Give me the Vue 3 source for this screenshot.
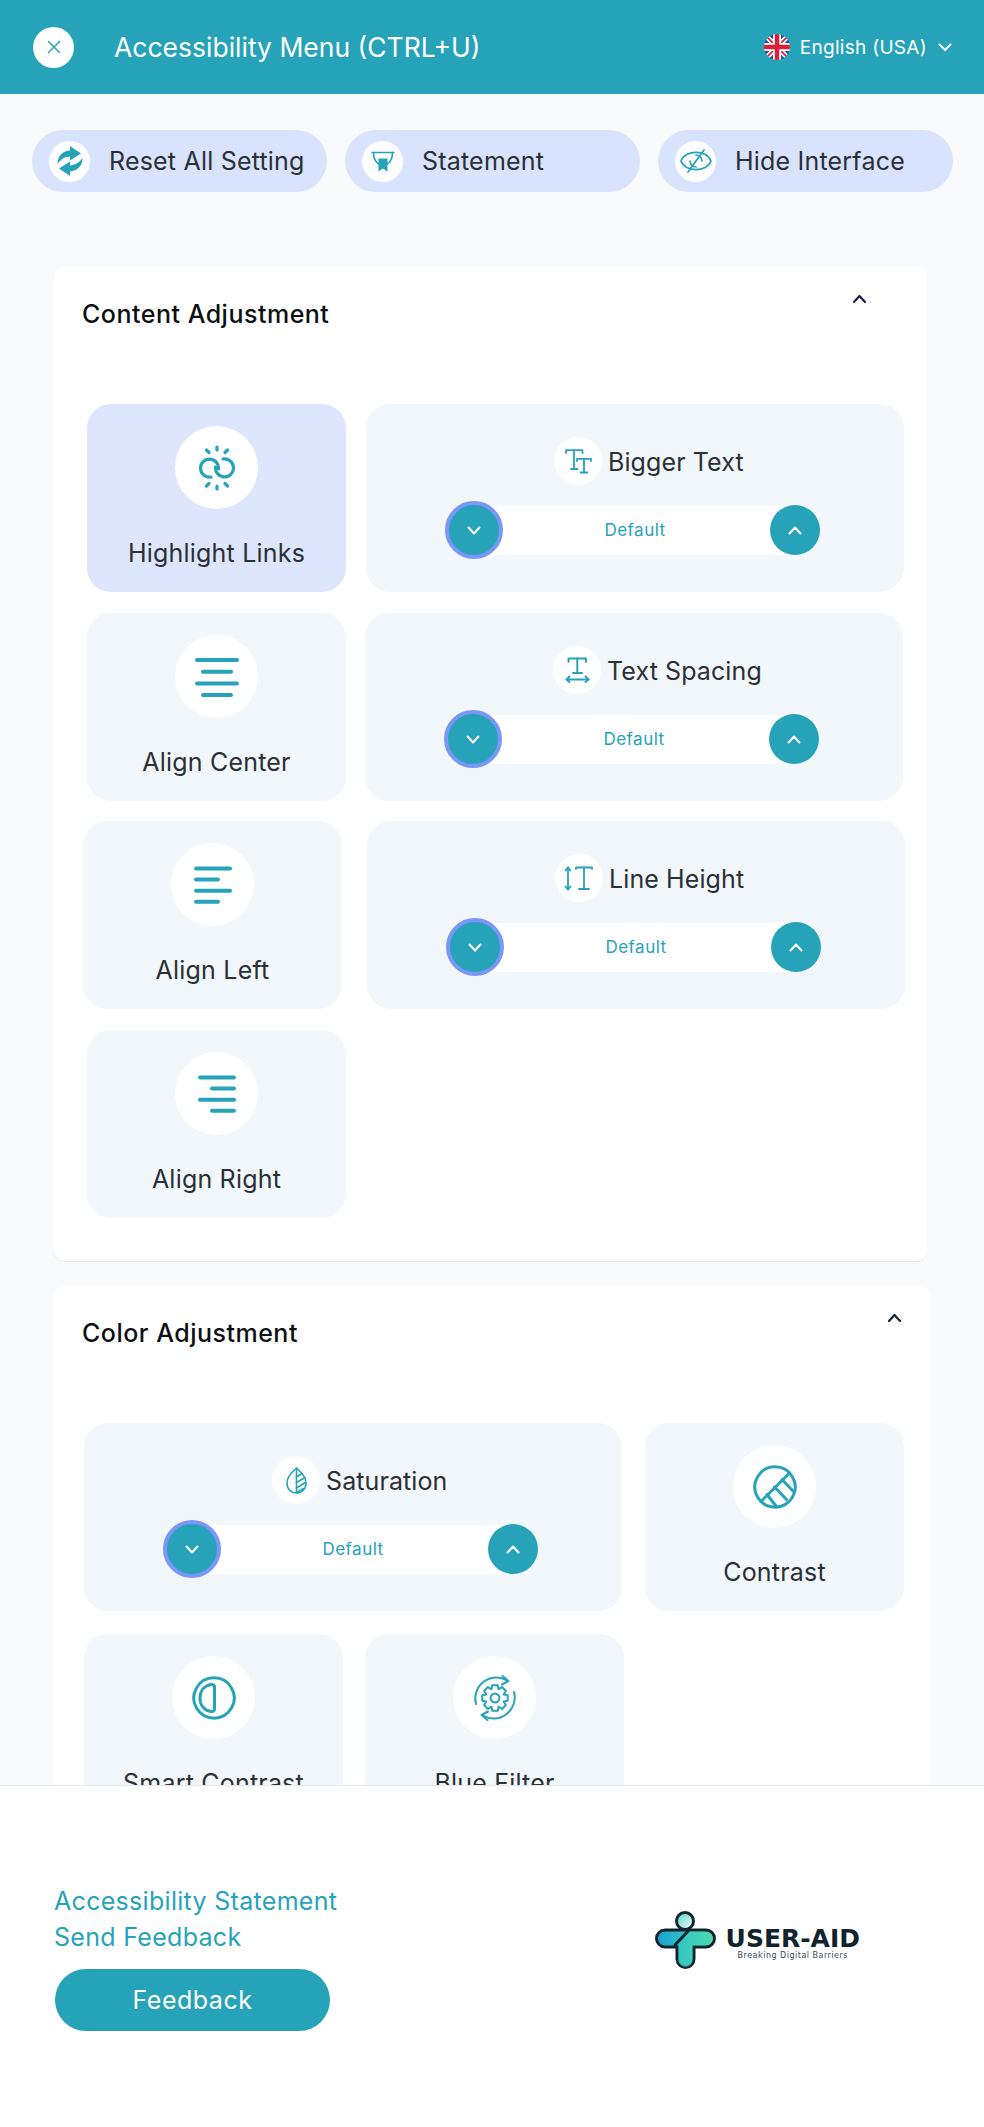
<script setup>
import { h } from 'vue'

const TEAL = '#26a3b9'

// gear outline used by the blue filter icon
const gear = (cx, cy, r1, r2, n) => {
  const pts = []
  const step = (Math.PI * 2) / n
  for (let i = 0; i < n; i++) {
    const a = i * step - Math.PI / 2
    const o = [[r1, -0.3], [r2, -0.17], [r2, 0.17], [r1, 0.3]]
    o.forEach(([r, f]) => {
      pts.push((cx + r * Math.cos(a + f * step * 1.6)).toFixed(2) + ' ' + (cy + r * Math.sin(a + f * step * 1.6)).toFixed(2))
    })
  }
  return 'M' + pts.join('L') + 'Z'
}

const bars = (rows) => rows.map(([x1, x2, y]) => `M${x1} ${y}H${x2}`)

const icons = {
  close: { w: 16, h: 16, sw: 1.5, paths: ['M2.5 2.5L13.5 13.5', 'M13.5 2.5L2.5 13.5'] },
  reset: {
    w: 26, h: 30, sw: 0,
    paths: [
      { f: 'M0.5 18C0.5 10 6 4.8 13 4.6V0L24 7.4L13 14.6V10.6C8 10.8 3.5 13.5 0.5 18Z' },
      { f: 'M25.500 12C25.500 20 20 25.200 13 25.400V30L2 22.600L13 15.400V19.400C18 19.200 22.500 16.500 25.500 12Z' }
    ]
  },
  statement: {
    w: 24, h: 21, sw: 1.6,
    paths: ['M1 1.5H23', 'M2.5 1.5C2.5 8 5 11.5 8 13', 'M21.5 1.5C21.5 8 19 11.5 16 13', { f: 'M7.5 7.5H16.5V20.5L12 17.5L7.5 20.5Z' }]
  },
  hide: {
    w: 32, h: 24, sw: 1.7,
    paths: ['M1 12C5 0.5 27 0.5 31 12C27 23.500 5 23.500 1 12Z', 'M16 6A6 6 0 0 1 22 12', 'M10 12A6 6 0 0 0 16 18', 'M8 23L24 1']
  },
  link: {
    w: 36, h: 46, sw: 3.2,
    paths: ['M12 32A9 9 0 1 1 19.5 24', 'M24 14A9 9 0 1 1 16.5 22', 'M18 2V5', 'M7.5 5L10 7.5', 'M28.5 5L26 7.5', 'M18 41V44', 'M7.5 41L10 38.5', 'M28.5 41L26 38.5']
  },
  center: { w: 44, h: 40, sw: 4, paths: bars([[2, 42, 3], [8, 36, 14.7], [2, 42, 26.4], [8, 36, 38]]) },
  left: { w: 38, h: 38, sw: 4, paths: bars([[2, 36, 2.5], [2, 24, 13.6], [2, 36, 24.7], [2, 24, 35.8]]) },
  right: { w: 38, h: 38, sw: 4, paths: bars([[2, 36, 2.5], [14, 36, 13.6], [2, 36, 24.7], [14, 36, 35.8]]) },
  bigger: {
    w: 27, h: 25, sw: 1.8,
    paths: ['M1 4V1.2H17.5V4', 'M9 1.2V20', 'M6 20H12.5', 'M12 12V9.8H26V12', 'M19 9.8V23.5', 'M15.5 23.5H22.5']
  },
  spacing: {
    w: 25, h: 26, sw: 1.9,
    paths: ['M3.5 5V1.5H21V5', 'M12.3 1.5V16', 'M8 16H17', 'M1.5 22.5H23.5', 'M4.5 19.5L1.5 22.5L4.5 25', 'M20.5 19.5L23.5 22.5L20.5 25']
  },
  height: {
    w: 30, h: 25, sw: 1.8,
    paths: ['M4 1.5V23.5', 'M1.5 4.5L4 1.5L6.5 4.5', 'M1.5 20.5L4 23.5L6.5 20.5', 'M12 3V1.5H28V3', 'M20 1.5V23', 'M15 23H25']
  },
  leaf: {
    w: 21, h: 27, sw: 1.6,
    paths: ['M10.5 1C4 6.5 1 11 1 16C1 22 5 26 10.5 26C16 26 20 22 20 16C20 11 17 6.5 10.5 1Z', 'M10.5 1V26', 'M10.5 10L16 6.5', 'M10.5 15.5L19 10.5', 'M10.5 21L19.5 15.5', 'M10.5 25.5L17.5 21.5']
  },
  contrast: {
    w: 44, h: 44, sw: 3,
    paths: ['M22 1.8A20.2 20.2 0 1 0 22.01 1.8Z', 'M8 36.5L36.5 8', 'M14 29.5L23 41', 'M21.5 22L33.5 34.5', 'M29 14.5L40 26']
  },
  smart: {
    w: 44, h: 44, sw: 3,
    paths: ['M22 1.8A20.2 20.2 0 1 0 22.01 1.8Z', 'M19.500 8.500C12 9.500 8 15 8 22C8 29 12 34.500 19.500 35.500C21.500 35.700 22.500 34.700 22.500 33V11C22.500 9.300 21.500 8.300 19.500 8.500Z']
  },
  filter: {
    w: 46, h: 46, sw: 2,
    paths: [
      'M4 29A21 21 0 0 1 35 5.5', 'M30.5 1L36.5 6L30 9.5', 'M42 17A21 21 0 0 1 11 40.5', 'M15.5 45L9.5 40L16 36.5',
      gear(23, 23, 9.5, 13, 8), 'M23 18.5A4.5 4.5 0 1 0 23.01 18.5Z'
    ]
  }
}

const Ico = (props) => {
  const i = icons[props.name]
  return h('svg', {
    width: i.w, height: i.h, viewBox: `0 0 ${i.w} ${i.h}`, fill: 'none', stroke: TEAL,
    'stroke-width': i.sw, 'stroke-linecap': 'round', 'stroke-linejoin': 'round'
  }, i.paths.map((p) => typeof p === 'string' ? h('path', { d: p }) : h('path', { d: p.f, fill: TEAL, stroke: 'none' })))
}
Ico.props = ['name']

const actions = [
  { label: 'Reset All Setting', icon: 'reset' },
  { label: 'Statement', icon: 'statement' },
  { label: 'Hide Interface', icon: 'hide' }
]

const sections = [
  {
    title: 'Content Adjustment',
    cls: 'card-content',
    rows: [
      { left: 33, top: 0, gap: 20, items: [{ label: 'Highlight Links', icon: 'link', active: true }, { label: 'Bigger Text', icon: 'bigger', wide: true }] },
      { left: 33, top: 21, gap: 19, items: [{ label: 'Align Center', icon: 'center' }, { label: 'Text Spacing', icon: 'spacing', wide: true }] },
      { left: 29, top: 20, gap: 25, items: [{ label: 'Align Left', icon: 'left' }, { label: 'Line Height', icon: 'height', wide: true }] },
      { left: 33, top: 21, gap: 21, items: [{ label: 'Align Right', icon: 'right' }] }
    ]
  },
  {
    title: 'Color Adjustment',
    cls: 'card-color',
    rows: [
      { left: 30, top: 0, gap: 23, items: [{ label: 'Saturation', icon: 'leaf', wide: true }, { label: 'Contrast', icon: 'contrast' }] },
      { left: 30, top: 23, gap: 22, items: [{ label: 'Smart Contrast', icon: 'smart' }, { label: 'Blue Filter', icon: 'filter' }] }
    ]
  }
]
</script>

<template>
  <div class="page">
    <header class="topbar">
      <button class="close"><Ico name="close" /></button>
      <h1 class="title">Accessibility Menu (CTRL+U)</h1>
      <div class="lang">
        <svg width="26" height="26" viewBox="0 0 26 26">
          <defs>
            <clipPath id="flagClip"><circle cx="13" cy="13" r="13" /></clipPath>
          </defs>
          <g clip-path="url(#flagClip)">
            <rect width="26" height="26" fill="#1f4ea3" />
            <path d="M0 0L26 26M26 0L0 26" stroke="#fff" stroke-width="5" />
            <path d="M0 0L26 26M26 0L0 26" stroke="#d8203a" stroke-width="1.6" />
            <path d="M13 0V26M0 13H26" stroke="#fff" stroke-width="8" />
            <path d="M13 0V26M0 13H26" stroke="#d8203a" stroke-width="4.5" />
          </g>
        </svg>
        <span>English (USA)</span>
        <svg class="lang-caret" width="14" height="9" viewBox="0 0 14 9" fill="none" stroke="#fff" stroke-width="2" stroke-linecap="round" stroke-linejoin="round">
          <path d="M1.5 1.5L7 7L12.5 1.5" />
        </svg>
      </div>
    </header>

    <main class="body">
      <div class="actions">
        <button v-for="a in actions" :key="a.label" class="action">
          <span class="action-icon"><Ico :name="a.icon" /></span>
          <span>{{ a.label }}</span>
        </button>
      </div>

      <section v-for="s in sections" :key="s.title" class="card" :class="s.cls">
        <div class="card-head">
          <h2>{{ s.title }}</h2>
          <svg class="card-caret" width="15" height="10" viewBox="0 0 15 10" fill="none" stroke="#13204d" stroke-width="2.2" stroke-linecap="round" stroke-linejoin="round">
            <path d="M2 8L7.5 2L13 8" />
          </svg>
        </div>

        <div
          v-for="(row, ri) in s.rows"
          :key="ri"
          class="row"
          :style="{ marginLeft: row.left + 'px', marginTop: row.top + 'px', gap: row.gap + 'px' }"
        >
          <template v-for="item in row.items" :key="item.label">
            <div v-if="item.wide" class="tile tile-wide">
              <div class="wide-head">
                <span class="small-circle"><Ico :name="item.icon" /></span>
                <span class="wide-label">{{ item.label }}</span>
              </div>
              <div class="stepper">
                <button class="step step-down">
                  <svg width="14" height="9" viewBox="0 0 14 9" fill="none" stroke="#fff" stroke-width="2" stroke-linecap="round" stroke-linejoin="round"><path d="M1.5 1.5L7 7.5L12.5 1.5" /></svg>
                </button>
                <div class="step-value">Default</div>
                <button class="step step-up">
                  <svg width="14" height="9" viewBox="0 0 14 9" fill="none" stroke="#fff" stroke-width="2" stroke-linecap="round" stroke-linejoin="round"><path d="M1.5 7.5L7 1.5L12.5 7.5" /></svg>
                </button>
              </div>
            </div>
            <div v-else class="tile tile-small" :class="{ active: item.active }">
              <span class="big-circle"><Ico :name="item.icon" /></span>
              <span class="tile-label">{{ item.label }}</span>
            </div>
          </template>
        </div>
      </section>
    </main>

    <footer class="footer">
      <div class="footer-left">
        <a class="footer-link">Accessibility Statement</a>
        <a class="footer-link">Send Feedback</a>
        <button class="feedback">Feedback</button>
      </div>
      <div class="logo">
        <svg width="62" height="58" viewBox="0 0 62 58">
          <defs>
            <linearGradient id="logoBar" x1="0" y1="0" x2="1" y2="0">
              <stop offset="0" stop-color="#1a9fd6" />
              <stop offset="0.5" stop-color="#2fc4c0" />
              <stop offset="1" stop-color="#62e39a" />
            </linearGradient>
            <linearGradient id="logoHead" x1="0" y1="0" x2="1" y2="1">
              <stop offset="0" stop-color="#4fd8c8" />
              <stop offset="1" stop-color="#ffffff" />
            </linearGradient>
          </defs>
          <circle cx="30" cy="10" r="8.5" fill="url(#logoHead)" stroke="#10242f" stroke-width="3" />
          <path d="M10 19H51a8.5 8.5 0 0 1 0 17H39V48a8.500 8.500 0 0 1 -17 0V36H10a8.500 8.500 0 0 1 0 -17Z" fill="url(#logoBar)" stroke="#10242f" stroke-width="3" />
          <path d="M35 20.500H50a7 7 0 0 1 0 14H37.500V49a7 7 0 0 1 -14 0V34.500Z" fill="#3fcdbf" opacity="0.55" />
          <path d="M20 34L34 19" stroke="#10242f" stroke-width="3" stroke-linecap="round" />
        </svg>
        <div class="logo-text">
          <div class="logo-name">USER-AID</div>
          <div class="logo-tag">Breaking Digital Barriers</div>
        </div>
      </div>
    </footer>
  </div>
</template>

<style>
body {
  margin: 0;
  background: #f9fafc;
}
</style>

<style scoped>
.page {
  width: 984px;
  height: 2127px;
  display: flex;
  flex-direction: column;
  overflow: hidden;
  font-family: Inter, "Open Sans", sans-serif;
  color: #2b2f36;
}

button {
  font-family: inherit;
  border: none;
  cursor: pointer;
  padding: 0;
}

.topbar {
  height: 94px;
  flex: none;
  background: #26a3b9;
  color: #fff;
  display: flex;
  align-items: center;
  padding-left: 33px;
  padding-right: 32px;
  box-sizing: border-box;
}

.close {
  width: 41px;
  height: 41px;
  border-radius: 50%;
  background: #fff;
  display: flex;
  align-items: center;
  justify-content: center;
}

.title {
  margin: 0 0 0 40px;
  font-size: 26.5px;
  font-weight: 400;
  line-height: 36px;
}

.lang {
  margin-left: auto;
  display: flex;
  align-items: center;
  font-size: 19px;
  letter-spacing: 0.3px;
}

.lang span {
  margin-left: 10px;
}

.lang-caret {
  margin-left: 11px;
}

.body {
  flex: 1;
  min-height: 0;
  overflow: hidden;
  background: #f9fafc;
}

.actions {
  display: flex;
  gap: 18px;
  padding: 36px 0 0 32px;
  margin-bottom: 75px;
}

.action {
  width: 295px;
  height: 62px;
  border-radius: 31px;
  background: #d9e3fd;
  display: flex;
  align-items: center;
  padding-left: 17px;
  gap: 19px;
  font-size: 25px;
  letter-spacing: 0.2px;
  color: #2b2f36;
}

.action-icon {
  width: 41px;
  height: 41px;
  border-radius: 50%;
  background: #fff;
  display: flex;
  align-items: center;
  justify-content: center;
  flex: none;
}

.card {
  background: #fff;
  border-radius: 10px;
  margin-left: 54px;
  width: 873px;
  padding-bottom: 43px;
  margin-bottom: 25px;
  box-shadow: 0 1px 0 #e5e9ee;
}

.card-color {
  width: 876px;
  box-shadow: none;
}

.card-head {
  height: 137px;
  box-sizing: border-box;
  display: flex;
  justify-content: space-between;
  padding: 29px 60px 0 28px;
}

.card-color .card-head {
  padding-right: 28px;
}

.card-head h2 {
  margin: 0;
  font-size: 25px;
  font-weight: 450;
  line-height: 36px;
  letter-spacing: 0.5px;
  color: #0c0f14;
}

.card-caret {
  margin-top: -2px;
}

.row {
  display: flex;
}

.tile {
  height: 188px;
  border-radius: 24px;
  background: #f1f7fa;
  box-sizing: border-box;
  flex: none;
}

.tile-small {
  width: 259px;
  padding-top: 22px;
  display: flex;
  flex-direction: column;
  align-items: center;
}

.tile-small.active {
  background: #dee6fe;
}

.big-circle {
  width: 83px;
  height: 83px;
  border-radius: 50%;
  background: #fff;
  display: flex;
  align-items: center;
  justify-content: center;
  flex: none;
}

.tile-label {
  margin-top: 26px;
  font-size: 25px;
  line-height: 36px;
  letter-spacing: 0.2px;
  white-space: nowrap;
}

.tile-wide {
  width: 538px;
  padding-top: 33px;
}

.wide-head {
  display: flex;
  align-items: center;
  padding-left: 188px;
  height: 48px;
}

.small-circle {
  width: 48px;
  height: 48px;
  border-radius: 50%;
  background: #fff;
  display: flex;
  align-items: center;
  justify-content: center;
  flex: none;
}

.wide-label {
  margin: 2px 0 0 6px;
  font-size: 25px;
  line-height: 36px;
  letter-spacing: 0.1px;
  white-space: nowrap;
}

.stepper {
  display: flex;
  align-items: center;
  width: 375px;
  height: 58px;
  margin: 16px 0 0 79px;
}

.step {
  position: relative;
  z-index: 1;
  border-radius: 50%;
  background: #26a3b9;
  display: flex;
  align-items: center;
  justify-content: center;
  flex: none;
}

.step-down {
  width: 58px;
  height: 58px;
  border: 4px solid #7b96f7;
  box-sizing: border-box;
}

.step-up {
  width: 50px;
  height: 50px;
}

.step-value {
  flex: 1;
  height: 49px;
  margin: 0 -25px;
  padding-right: 3px;
  box-sizing: border-box;
  background: #fff;
  color: #26a3b9;
  font-size: 17px;
  letter-spacing: 0.5px;
  line-height: 49px;
  text-align: center;
}

.footer {
  height: 342px;
  flex: none;
  background: #fff;
  border-top: 1px solid #e5e9ee;
  box-sizing: border-box;
  display: flex;
  position: relative;
  z-index: 2;
}

.footer-left {
  padding: 97px 0 0 54px;
  display: flex;
  flex-direction: column;
  align-items: flex-start;
}

.footer-link {
  font-size: 25px;
  line-height: 36px;
  letter-spacing: 0.3px;
  color: #26a3b9;
}

.feedback {
  width: 275px;
  height: 62px;
  border-radius: 31px;
  background: #26a3b9;
  color: #fff;
  font-size: 25px;
  letter-spacing: 0.5px;
  margin: 14px 0 0 1px;
}

.logo {
  margin-left: auto;
  margin-right: 124px;
  margin-top: 125px;
  display: flex;
  align-items: flex-start;
  gap: 9px;
  height: 58px;
}

.logo-text {
  padding-top: 15px;
  text-align: center;
}

.logo-name {
  font-family: "DejaVu Sans", sans-serif;
  font-weight: 700;
  font-size: 25px;
  line-height: 25px;
  color: #10242f;
}

.logo-tag {
  font-family: "DejaVu Sans", sans-serif;
  font-size: 8px;
  line-height: 10px;
  letter-spacing: 0.5px;
  color: #3c4a55;
}
</style>
